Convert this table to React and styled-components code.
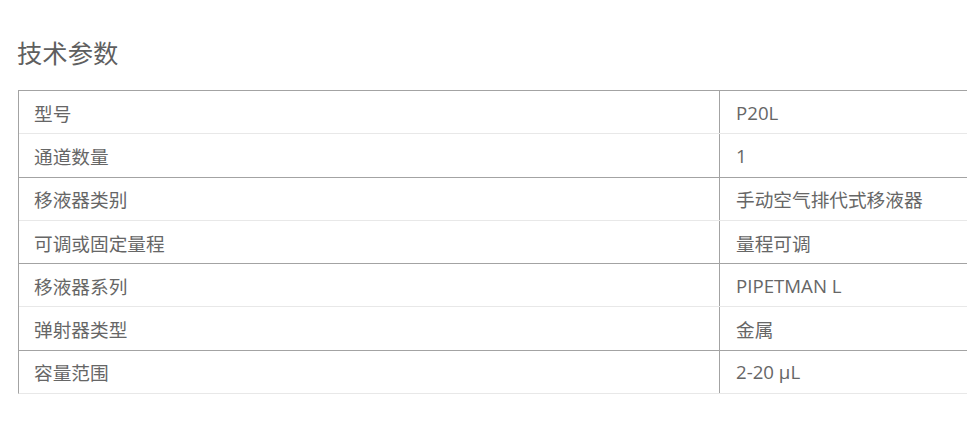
import React from 'react'
import styled, { createGlobalStyle } from 'styled-components'

const GlobalStyle = createGlobalStyle`
    html, body {
        margin: 0;
        padding: 0;
        background: #fff;
        overflow: hidden;
    }
    body {
        font-family: "Open Sans", "Noto Sans CJK SC", sans-serif;
        color: #666;
    }
`

const Section = styled.section`
    padding: 34px 0 0 18px;
    width: 949px;
    overflow: hidden;
`

const Title = styled.h2`
    margin: 0 0 18px -1px;
    font-size: 25.33px;
    font-weight: 400;
    line-height: 38px;
    color: #5f5f5f;
`

const Table = styled.div`
    width: 1100px;
    border-left: 1px solid #a3a3a3;
    border-bottom: 1px solid #e8e8e8;
`

const Row = styled.div`
    display: grid;
    grid-template-columns: 700px 1fr;
    height: 43.3px;
    box-sizing: border-box;
    border-top: 1px solid ${p => (p.$major ? '#a3a3a3' : '#e8e8e8')};
`

const Cell = styled.div`
    display: flex;
    align-items: center;
    padding-left: ${p => (p.$value ? '16px' : '15px')};
    font-size: 18.67px;
    color: #666;
    border-left: ${p => (p.$value ? '1px solid #a3a3a3' : 'none')};
    white-space: nowrap;
`

const specs = [
    ['型号', 'P20L'],
    ['通道数量', '1'],
    ['移液器类别', '手动空气排代式移液器'],
    ['可调或固定量程', '量程可调'],
    ['移液器系列', 'PIPETMAN L'],
    ['弹射器类型', '金属'],
    ['容量范围', '2-20 µL'],
]

const App = () => {
    return (
        <>
            <GlobalStyle />
            <Section>
                <Title>技术参数</Title>
                <Table>
                    {specs.map(([label, value], i) => (
                        <Row key={label} $major={i % 2 === 0}>
                            <Cell>{label}</Cell>
                            <Cell $value>{value}</Cell>
                        </Row>
                    ))}
                </Table>
            </Section>
        </>
    )
}

export default App
